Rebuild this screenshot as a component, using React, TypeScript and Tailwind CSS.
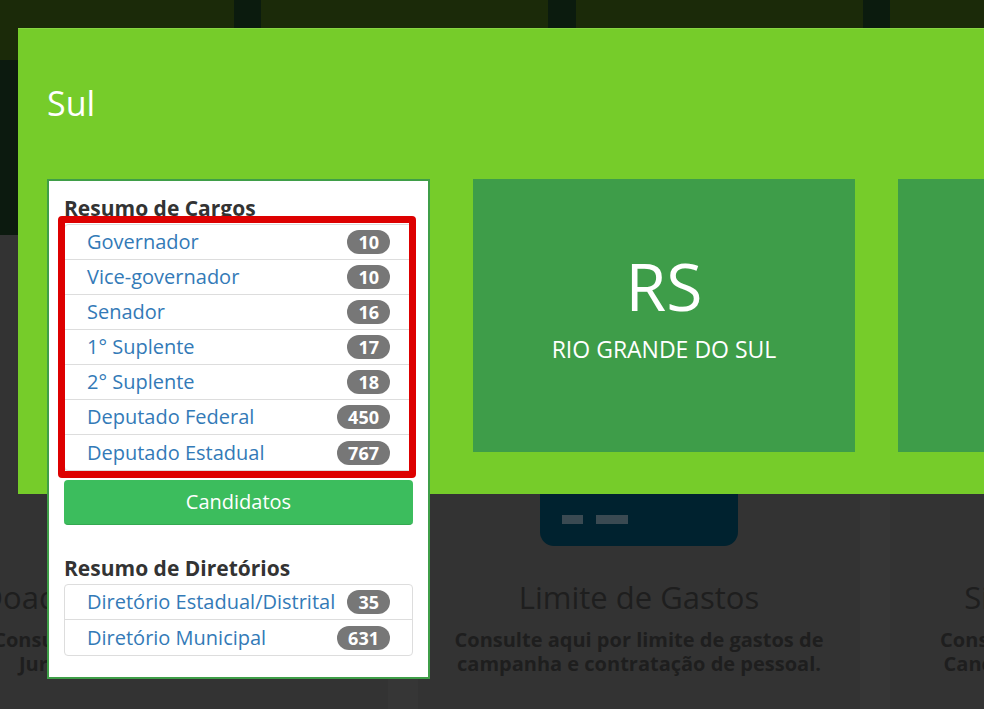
import React from "react";

type Row = { label: string; count: number };

const cargos: Row[] = [
  { label: "Governador", count: 10 },
  { label: "Vice-governador", count: 10 },
  { label: "Senador", count: 16 },
  { label: "1° Suplente", count: 17 },
  { label: "2° Suplente", count: 18 },
  { label: "Deputado Federal", count: 450 },
  { label: "Deputado Estadual", count: 767 },
];

const diretorios: Row[] = [
  { label: "Diretório Estadual/Distrital", count: 35 },
  { label: "Diretório Municipal", count: 631 },
];

function ListGroup({ rows }: { rows: Row[] }) {
  return (
    <div className="flex flex-col divide-y divide-[#dddddd] rounded-[4px] border border-[#dddddd]">
      {rows.map((r) => (
        <div
          key={r.label}
          className="flex h-[35px] items-center justify-between pl-[22px] pr-[22px]"
        >
          <span className="text-[20px] leading-none text-[#337ab7]">{r.label}</span>
          <span className="flex h-[24px] items-center rounded-full bg-[#777777] px-[11px] text-[18px] font-bold leading-none text-white">
            {r.count}
          </span>
        </div>
      ))}
    </div>
  );
}

function StateCard({ sigla, nome }: { sigla?: string; nome?: string }) {
  return (
    <div className="flex h-[273px] w-[382px] shrink-0 flex-col items-center bg-[#3e9d49] pt-[73px] text-white">
      {sigla && <div className="text-[66px] leading-none">{sigla}</div>}
      {nome && <div className="mt-[17px] text-[23px] leading-[28px]">{nome}</div>}
    </div>
  );
}

function ServiceText({ title, lines }: { title: string; lines: [string, string] }) {
  return (
    <>
      <div className="whitespace-nowrap text-[31px] leading-[37px]">{title}</div>
      <div className="mt-[12px] text-center text-[20px] font-bold leading-[24px]">
        <div className="whitespace-nowrap">{lines[0]}</div>
        <div className="whitespace-nowrap">{lines[1]}</div>
      </div>
    </>
  );
}

export default function App() {
  return (
    <div className="relative h-[709px] w-[984px] overflow-hidden bg-[#333333] font-['Open_Sans',sans-serif]">
      {/* page behind the regional dialog */}
      <div className="flex flex-col">
        <div className="flex h-[60px] bg-[#1b2a09]">
          <div className="w-[234px] shrink-0" />
          <div className="w-[27px] shrink-0 bg-[#0b1b0e]" />
          <div className="w-[287px] shrink-0" />
          <div className="w-[28px] shrink-0 bg-[#0b1b0e]" />
          <div className="w-[287px] shrink-0" />
          <div className="w-[27px] shrink-0 bg-[#0b1b0e]" />
          <div className="flex-1" />
        </div>
        <div className="h-[175px] bg-[#0c1a0f]" />
        <div className="ml-[-54px] flex h-[474px]">
          {/* Doadores */}
          <div className="flex w-[442px] shrink-0 flex-col items-center bg-[#333333] pt-[344px] text-[#1e1e1e]">
            <ServiceText
              title="Doadores e Fornecedores"
              lines={["Consulte aqui os doadores físicos e", "Jurídicas e seus fornecedores."]}
            />
          </div>
          <div className="w-[30px] shrink-0 bg-[#363636]" />
          {/* Limite de Gastos */}
          <div className="flex w-[442px] shrink-0 flex-col items-center bg-[#333333] pt-[181px] text-[#1e1e1e]">
            <div className="mb-[33px] flex h-[130px] w-[198px] items-end rounded-[14px] bg-[#00222f] pb-[22px] pl-[22px]">
              <div className="flex gap-[13px]">
                <div className="h-[9px] w-[21px] bg-[#3a4a52]" />
                <div className="h-[9px] w-[32px] bg-[#3a4a52]" />
              </div>
            </div>
            <ServiceText
              title="Limite de Gastos"
              lines={["Consulte aqui por limite de gastos de", "campanha e contratação de pessoal."]}
            />
          </div>
          <div className="w-[30px] shrink-0 bg-[#363636]" />
          {/* Situação */}
          <div className="flex w-[442px] shrink-0 flex-col items-center bg-[#333333] pt-[344px] text-[#1e1e1e]">
            <ServiceText
              title="Situação de Registro"
              lines={["Consulte aqui a situação atual dos", "Candidatos inscritos nas eleições."]}
            />
          </div>
        </div>
      </div>

      {/* regional dialog */}
      <div className="absolute left-[18px] top-[28px] h-[466px] w-[1000px] border-t border-[#86d443] bg-[#76cc2a] pl-[29px] pt-[57px]">
        <h2 className="text-[34px] leading-[34px] text-white">Sul</h2>
        <div className="mt-[59px] flex items-start gap-[43px]">
          <div className="w-[383px] shrink-0 border-2 border-[#3f9e48] bg-white px-[15px] pb-[21px] pt-[13px]">
            <h3 className="text-[21px] font-bold leading-[28px] text-[#333333]">Resumo de Cargos</h3>
            <div className="mt-[2px]">
              <ListGroup rows={cargos} />
            </div>
            <button className="mt-[9px] flex h-[45px] w-full items-center justify-center rounded-[4px] border-b border-[#34a851] bg-[#3cbd5d] text-[20px] text-white">
              Candidatos
            </button>
            <h3 className="mt-[29px] text-[21px] font-bold leading-[28px] text-[#333333]">Resumo de Diretórios</h3>
            <div className="mt-[2px]">
              <ListGroup rows={diretorios} />
            </div>
          </div>
          <StateCard sigla="RS" nome="RIO GRANDE DO SUL" />
          <StateCard />
        </div>
      </div>

      {/* highlight drawn over the cargos list */}
      <div className="pointer-events-none absolute left-[58px] top-[216px] h-[262px] w-[358px] rounded-[4px] border-[7px] border-[#dd0000]" />
    </div>
  );
}
